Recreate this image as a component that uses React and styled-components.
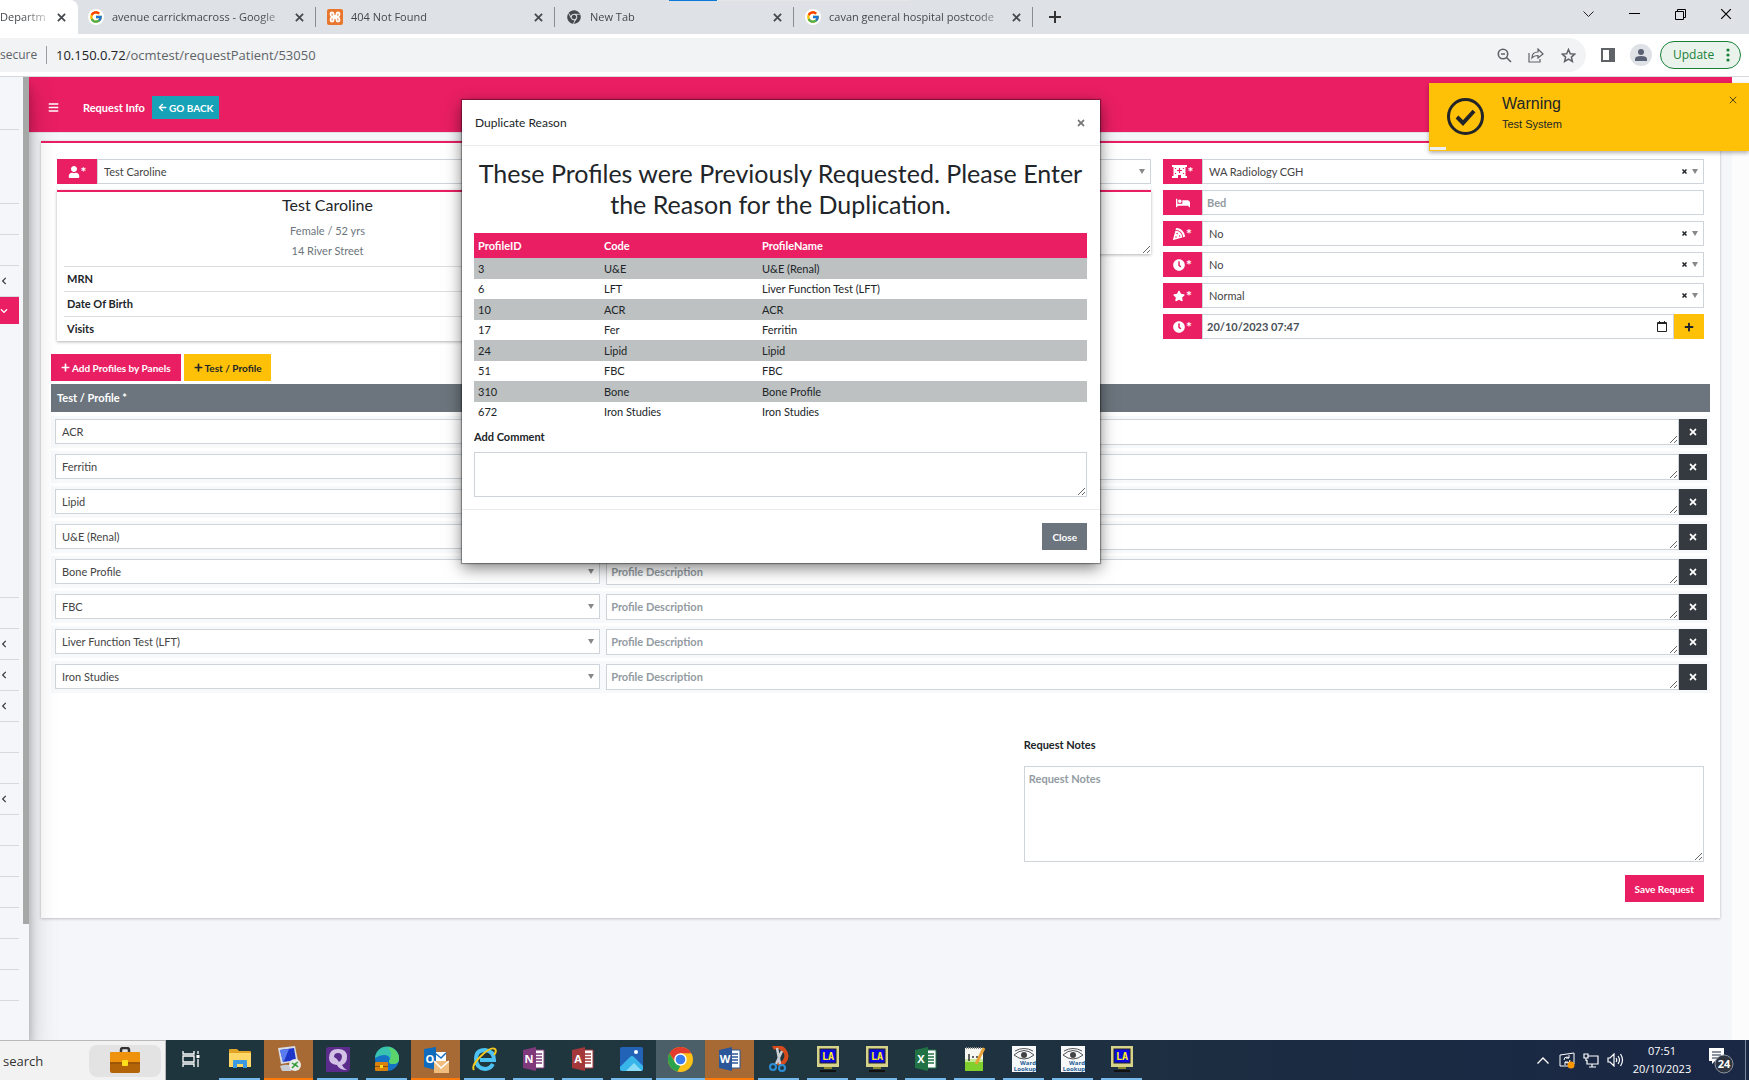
import React from "react";
import styled, { createGlobalStyle, css } from "styled-components";
import {
  FaArrowLeft, FaBars, FaBed, FaChevronDown, FaChevronLeft, FaChrome, FaClock,
  FaPizzaSlice, FaPlus, FaStar, FaTimes, FaUser,
} from "react-icons/fa";
import { FcGoogle } from "react-icons/fc";

const pink = "#e91e63";
const amber = "#ffc107";
const slate = "#6c757d";
const line = "#ced4da";
const appFont = `Lato, "Open Sans", sans-serif`;
const chromeFont = `"Open Sans", "Noto Sans", sans-serif`;

const GlobalStyle = createGlobalStyle`
  *, *::before, *::after { box-sizing: border-box; }
  html, body, #root { height: 100%; }
  body {
    margin: 0;
    overflow: hidden;
    font: 11px/16px ${appFont};
    color: #212529;
    background: #f4f6f9;
  }
  button, input, textarea, select { font: inherit; color: inherit; margin: 0; border-radius: 0; }
  button { cursor: pointer; }
  h1, h2, h3, p, ul { margin: 0; padding: 0; font-weight: 400; }
  ul { list-style: none; }
  svg { display: block; flex: none; }
`;

const Screen = styled.div`
  display: flex;
  flex-direction: column;
  height: 100vh;
`;

/* ---------- browser window ---------- */

const TabStrip = styled.div`
  position: relative;
  display: flex;
  flex: none;
  height: 34px;
  background: #dee1e6;
  font: 11px/16px ${chromeFont};
  color: #45494d;
`;

const LoadingLine = styled.div`
  position: absolute;
  top: 0;
  left: 669px;
  width: 241px;
  height: 1px;
  background: linear-gradient(to right, #0b78d8 48px, #e6e6e6 48px);
`;

const Tab = styled.div`
  display: flex;
  align-items: center;
  gap: 8px;
  width: ${(p) => (p.$active ? 78 : 239)}px;
  margin-right: ${(p) => (p.$active ? -1 : 0)}px;
  padding: 0 9px 0 ${(p) => (p.$active ? 0 : 11)}px;
  ${(p) => p.$active && css`background: #fff; border-radius: 0 8px 0 0;`}
`;

const TabTitle = styled.span`
  flex: 1;
  white-space: nowrap;
  mask-image: linear-gradient(to right, #000 calc(100% - 24px), rgba(0, 0, 0, 0.3));
`;

const PlainButton = styled.button`
  display: flex;
  align-items: center;
  justify-content: center;
  width: ${(p) => p.$w || 16}px;
  height: ${(p) => p.$h || 16}px;
  padding: 0;
  border: 0;
  background: none;
`;

const TabRule = styled.span`
  align-self: center;
  width: 1px;
  height: 20px;
  margin-left: -1px;
  background: #8a8d91;
`;

const NewTab = styled(PlainButton)`
  align-self: center;
  margin-left: 14px;
`;

const WindowControls = styled.div`
  display: flex;
  height: 28px;
  margin-left: auto;
  color: #000;
`;

const Favicon = styled.span`
  display: grid;
  place-items: center;
  width: 16px;
  height: 16px;
  border-radius: ${(p) => (p.$orange ? "2px" : "50%")};
  background: ${(p) => (p.$orange ? "#e8762c" : p.$plain ? "none" : "#fff")};
`;

const Toolbar = styled.div`
  display: flex;
  align-items: center;
  flex: none;
  height: 43px;
  padding-right: 8px;
  background: #fff;
  border-bottom: 1px solid #d5d8dc;
  font: 13px/18px ${chromeFont};
  color: #5f6368;
`;

const Omnibox = styled.div`
  display: flex;
  align-items: center;
  flex: 1;
  height: 34px;
  padding-right: 10px;
  background: #f1f3f4;
  border-radius: 0 17px 17px 0;
`;

const Security = styled.span`
  width: 47px;
  margin-right: 9px;
  border-right: 1px solid #9a9da1;
  font-size: 12px;
`;

const Address = styled.div`
  flex: 1;
  b { font-weight: 400; color: #202124; }
`;

const OmniActions = styled.div`
  display: flex;
  gap: 16px;
`;

const Avatar = styled(PlainButton)`
  margin-right: 8px;
  border-radius: 50%;
  background: #dee1e6;
  overflow: hidden;
`;

const UpdateButton = styled.button`
  display: flex;
  align-items: center;
  justify-content: space-between;
  width: 81px;
  height: 28px;
  padding: 0 10px 0 12px;
  border: 1px solid #188038;
  border-radius: 14px;
  background: #e9f3ec;
  color: #188038;
  font-size: 12px;
`;

/* ---------- page shell ---------- */

const Page = styled.div`
  position: relative;
  display: flex;
  flex: 1;
  min-height: 0;
`;

const Sidebar = styled.aside`
  position: relative;
  z-index: 1;
  display: flex;
  justify-content: space-between;
  width: 29px;
  background: #f4f6f9;
  box-shadow: 0 14px 28px rgba(0, 0, 0, 0.25), 0 10px 10px rgba(0, 0, 0, 0.22);
  clip-path: inset(0 -40px 0 0);
`;

const SideList = styled.ul`
  width: 19px;
`;

const SideItem = styled.li`
  display: flex;
  align-items: center;
  height: ${(p) => p.$h || 31}px;
  border-bottom: 1px solid #d6d9de;
  color: #343a40;
  ${(p) => p.$active && css`
    border: 0;
    background: ${pink};
    color: #fff;
  `}
`;

const SideScroll = styled.div`
  width: 6px;
  height: 88%;
  background: #a6a8a8;
`;

const Main = styled.main`
  flex: 1;
  min-width: 0;
`;

const Gutter = styled.div`
  width: 17px;
  background: #fcfcfc;
`;

const Navbar = styled.nav`
  display: flex;
  align-items: center;
  height: 56px;
  padding: 6px 19px 0;
  background: ${pink};
  border-bottom: 1px solid #dee2e6;
  color: #fff;
  font-weight: 700;
`;

const NavTitle = styled.span`
  margin: 0 7px 0 25px;
`;

const Button = styled.button`
  display: inline-flex;
  align-items: center;
  justify-content: center;
  gap: 2px;
  height: ${(p) => (p.$small ? 23 : 27)}px;
  padding: 0 ${(p) => (p.$small ? 6 : 10)}px;
  border: 0;
  background: ${(p) => p.$bg};
  color: ${(p) => p.$color || "#fff"};
  font-size: 10px;
  font-weight: 700;
  white-space: nowrap;
`;

const Card = styled.section`
  margin: 8px 12px;
  padding: 16px 10px;
  border-top: 2px solid ${pink};
  background: #fff;
  box-shadow: 0 0 1px rgba(0, 0, 0, 0.13), 0 1px 3px rgba(0, 0, 0, 0.2);
`;

/* ---------- request form ---------- */

const FormGrid = styled.div`
  display: grid;
  grid-template-columns: repeat(3, 1fr);
  gap: 12px;
  padding: 0 6px;
`;

const Stack = styled.div`
  display: flex;
  flex-direction: column;
  gap: 6px;
  min-width: 0;
`;

const Group = styled.div`
  display: flex;
  height: 25px;
`;

const Addon = styled.label`
  display: flex;
  align-items: center;
  justify-content: center;
  gap: 1px;
  width: ${(p) => (p.$wide ? 40 : 39)}px;
  background: ${pink};
  color: #fff;
  font-size: 14px;
  font-weight: 700;
`;

const SelectBox = styled.div`
  display: flex;
  align-items: center;
  flex: 1;
  min-width: 0;
  height: 25px;
  padding-right: 5px;
  border: 1px solid ${line};
  background: #fff;
`;

const Select = styled.select`
  flex: 1;
  min-width: 0;
  height: 23px;
  padding: 0 6px;
  border: 0;
  background: none;
  appearance: none;
  color: #444;
`;

const Input = styled.input`
  flex: 1;
  min-width: 0;
  padding: 0 4px;
  border: 1px solid ${line};
  border-right-width: ${(p) => (p.$joined ? 0 : 1)}px;
  background: #fff;
  color: #495057;
  font-weight: 700;
  &::placeholder { color: #939ba2; opacity: 1; }
`;

const DateTail = styled.button`
  display: grid;
  place-items: center;
  width: 24px;
  padding: 0;
  border: 1px solid ${line};
  border-left: 0;
  background: #fff;
`;

const AddDate = styled.button`
  display: grid;
  place-items: center;
  width: 30px;
  padding: 0;
  border: 0;
  background: ${amber};
`;

const TextArea = styled.textarea`
  display: block;
  width: 100%;
  height: ${(p) => p.$h}px;
  padding: ${(p) => p.$pad || 4}px 4px;
  border: 1px solid ${line};
  background: #fff;
  font-weight: 700;
  &::placeholder { color: #939ba2; opacity: 1; }
`;

const DetailsArea = styled(TextArea)`
  border-width: 2px 0 0;
  border-color: ${pink};
  box-shadow: 0 1px 3px rgba(0, 0, 0, 0.3);
`;

const PatientCard = styled.div`
  height: 151px;
  border-top: 2px solid ${pink};
  padding: 3px 7px 0;
  text-align: center;
  box-shadow: 0 1px 3px rgba(0, 0, 0, 0.3);
`;

const PatientName = styled.h2`
  margin-bottom: 8px;
  font-size: 16px;
  line-height: 20px;
`;

const PatientLine = styled.p`
  height: 20px;
  color: ${slate};
`;

const Facts = styled.div`
  margin-top: 3px;
`;

const Fact = styled.div`
  height: 25px;
  padding: 4px 3px;
  border-top: 1px solid #dcdfe2;
  text-align: left;
  font-weight: 700;
`;

const ButtonBar = styled.div`
  display: flex;
  gap: 3px;
  margin: 13px 0 3px;
`;

const ListHead = styled.h3`
  padding: 6px;
  margin-bottom: 4px;
  background: ${slate};
  color: #fff;
  font-size: 11px;
  font-weight: 700;
`;

const Rows = styled.div`
  display: grid;
  gap: 3px;
`;

const Row = styled.div`
  display: grid;
  grid-template-columns: 33% 1fr;
  gap: 6px;
  padding: 3px 3px 3px 4px;
  background: #f8f9fa;
`;

const RowEnd = styled.div`
  display: flex;
`;

const RemoveButton = styled.button`
  display: grid;
  place-items: center;
  flex: none;
  width: 28px;
  padding: 0;
  border: 0;
  background: #343a40;
  color: #fff;
`;

const Notes = styled.div`
  display: flex;
  flex-direction: column;
  gap: 13px;
  width: 41%;
  margin: 44px 6px 0 auto;
  font-weight: 700;
  ${Button} { align-self: flex-end; }
`;

/* ---------- dialog and toast ---------- */

const Dialog = styled.div`
  position: absolute;
  z-index: 2;
  top: 23px;
  left: 462px;
  width: 638px;
  background: #fff;
  box-shadow: 0 0 1px 1px rgba(0, 0, 0, 0.35), 0 5px 15px rgba(0, 0, 0, 0.5);
`;

const DialogHead = styled.header`
  display: flex;
  align-items: center;
  justify-content: space-between;
  height: 46px;
  padding: 0 11px 0 13px;
  border-bottom: 1px solid #e9ecef;
  font-size: 12px;
`;

const DialogBody = styled.div`
  padding: 12px 13px 12px 12px;
`;

const DialogTitle = styled.h1`
  margin-bottom: 13px;
  text-align: center;
  font-size: 25px;
  line-height: 31px;
`;

const Table = styled.table`
  width: 100%;
  table-layout: fixed;
  border-collapse: collapse;
  th, td { padding: 0 4px; text-align: left; }
  th { height: 25px; background: ${pink}; color: #fff; }
  th:nth-child(1) { width: 126px; }
  th:nth-child(2) { width: 158px; }
  td { height: 20px; }
  tbody tr:nth-child(odd) td { height: 21px; background: #bdc1c1; }
`;

const CommentLabel = styled.label`
  display: block;
  margin: 7px 0;
  font-weight: 700;
`;

const DialogFoot = styled.footer`
  display: flex;
  justify-content: flex-end;
  padding: 13px;
  border-top: 1px solid #e9ecef;
`;

const Toast = styled.div`
  position: absolute;
  z-index: 3;
  top: 6px;
  right: 0;
  display: flex;
  align-items: flex-start;
  width: 320px;
  height: 68px;
  padding: 15px 10px 0 18px;
  background: ${amber};
  box-shadow: 0 2px 4px rgba(0, 0, 0, 0.3);
  font-family: "Liberation Sans", Arial, sans-serif;
`;

const ToastText = styled.div`
  flex: 1;
  padding-left: 18px;
  margin-top: -4px;
  strong { display: block; font-size: 16px; line-height: 20px; font-weight: 400; }
  span { line-height: 20px; }
`;

const ToastProgress = styled.div`
  position: absolute;
  left: 1px;
  bottom: 1px;
  width: 16px;
  height: 3px;
  background: #efefef;
`;

/* ---------- taskbar ---------- */

const Taskbar = styled.footer`
  position: relative;
  z-index: 4;
  display: flex;
  flex: none;
  height: 40px;
  background: linear-gradient(to right, #1f353d 10%, #21373f 45%, #1b2b42 75%, #1a2745);
  color: #fff;
  font: 11px/18px ${chromeFont};
`;

const Search = styled.div`
  display: flex;
  align-items: center;
  justify-content: space-between;
  width: 166px;
  padding: 0 4px 0 3px;
  border-top: 1px solid #b9b9b9;
  border-right: 1px solid #b9b9b9;
  background: #f2f2f2;
  color: #333;
  font-size: 13px;
`;

const SearchPill = styled.button`
  display: grid;
  place-items: center;
  width: 72px;
  height: 32px;
  padding: 0;
  border: 0;
  border-radius: 8px;
  background: #e3e3e3;
`;

const taskFill = { alert: "#a86a35", active: "#4b5f68" };
const taskLine = { alert: "#ff7a0a", idle: "transparent" };

const Task = styled.button`
  display: grid;
  place-items: center;
  width: ${(p) => (taskFill[p.$mode] ? 49 : 41)}px;
  margin: 0 ${(p) => (taskFill[p.$mode] ? 0 : 4)}px;
  padding: 0;
  border: 0;
  border-bottom: 2px solid ${(p) => taskLine[p.$mode] || "#76b9ed"};
  background: ${(p) => taskFill[p.$mode] || "none"};
`;

const Tray = styled.div`
  display: flex;
  align-items: center;
  gap: 8px;
  margin-left: auto;
  padding-right: 3px;
`;

const Clock = styled.time`
  width: 62px;
  text-align: center;
`;

const Notice = styled(PlainButton)`
  margin: 0 3px 0 7px;
`;

const DesktopEdge = styled.span`
  align-self: stretch;
  width: 1px;
  background: #7c8798;
`;

/* ---------- drawings ---------- */

const Cross = ({ size = 9, w = 2 }) => (
  <svg width={size} height={size} viewBox="0 0 10 10" stroke="currentColor" strokeWidth={w} fill="none">
    <path d="M1 1 9 9M9 1 1 9" />
  </svg>
);

const Caret = () => (
  <svg width="6" height="5" viewBox="0 0 6 5"><path d="M0 0h6L3 5z" fill="#888" /></svg>
);

const Clinic = () => (
  <svg width="15" height="13" viewBox="0 0 15 13">
    <path d="M0 0h15v2h-1.500v9H15v2H9v-3H6v3H0v-2h1.500V2H0z" fill="#fff" />
    <path d="M7.500 3v5M5 5.500h5M3.500 3v1M11.500 3v1M3.500 8v1M11.500 8v1" stroke={pink} strokeWidth="1.200" />
  </svg>
);

const Office = ({ letter, color }) => (
  <svg width="24" height="26" viewBox="0 0 24 26">
    <path d="M12 4h10v18H12z" fill="#fff" stroke={color} />
    <path d="M14 8h6M14 11h6M14 14h6M14 17h6" stroke={color} strokeWidth="1.5" />
    <path d="M1 4 14 1v24L1 22z" fill={color} />
    <text x="7" y="17" textAnchor="middle" fontSize="11" fontWeight="700" fontFamily="Open Sans" fill="#fff">{letter}</text>
  </svg>
);

const Briefcase = ({ width = 30 }) => (
  <svg width={width} height={width * 0.87} viewBox="0 0 30 26">
    <path d="M11 5V3q0-2 2-2h4q2 0 2 2v2" fill="none" stroke="#333" strokeWidth="2.5" />
    <rect y="5" width="30" height="21" rx="2" fill="#b36408" />
    <path d="M0 7q0-2 2-2h26q2 0 2 2v9H0z" fill="#ef930c" />
    <path d="M0 15h30v2H0z" fill="#9c5607" />
    <rect x="12" y="13" width="6" height="6" rx="1" fill="#ffdf1b" />
  </svg>
);

const TaskView = () => (
  <svg width="18" height="18" viewBox="0 0 18 18" stroke="#fff" fill="none" strokeWidth="1.3">
    <path d="M1 1v3h11V1M1 17v-3h11v3M1 6h11v6H1zM16 1v3M16 9v8" /><path d="M14.500 5h3v3h-3z" fill="#fff" stroke="none" />
  </svg>
);

const Folder = () => (
  <svg width="24" height="22" viewBox="0 0 24 22">
    <path d="M1 2q0-1 1-1h7l2 2h11q1 0 1 1v15H1z" fill="#e0a526" />
    <path d="M1 5h22v14H1z" fill="#ffd767" />
    <path d="M5 20v-7q0-1 1-1h12q1 0 1 1v7h-4v-4H9v4z" fill="#3d9ae0" />
  </svg>
);

const Remote = () => (
  <svg width="24" height="26" viewBox="0 0 24 26">
    <path d="M1 2 18 0l3 15-17 3z" fill="#d8dce4" /><path d="m3 4 14-2 2 12L6 16z" fill="#1d36c9" />
    <path d="m3 4 9-1-5 12-1 1z" fill="#5a7cf0" />
    <path d="M3 20q8-3 14 1l-3 4H5z" fill="#c9ccd4" />
    <circle cx="18" cy="19" r="6" fill="#e8ebe8" /><path d="m15 17 3 2-3 3M21 16l-3 2 3 3" stroke="#2f9a36" strokeWidth="1.5" fill="none" />
  </svg>
);

const Purple = () => (
  <svg width="25" height="26" viewBox="0 0 25 26">
    <path d="M4 1h21v21q0 4-4 4H1V4q0-3 3-3z" fill="#5b2c8c" />
    <path d="M4 12Q4 3 13 3t9 8q0 6-5 8 1 3 5 5-8 0-10-5-8-1-8-7z" fill="#d3c2e6" />
    <path d="M9 11q0-4 4-4t4 4q0 3-3 5-1-3-5-5z" fill="#5b2c8c" />
  </svg>
);

const Edge = () => (
  <svg width="26" height="26" viewBox="0 0 26 26">
    <circle cx="13" cy="13" r="12" fill="#1572c4" />
    <path d="M1 12A12 12 0 0 1 25 13q0 5-6 5-5 0-4-3 2-3-1-5-5-3-13 2z" fill="#37c3b0" />
    <path d="M14 1q11 2 11 12 0 5-6 5-5 0-4-3 5-7-1-14z" fill="#5bd46c" />
    <rect x="1" y="16" width="13" height="9" rx="1" fill="#d9810c" /><path d="M1 20h13v1H1z" fill="#8b4a05" /><path d="M6 19h3v3H6z" fill="#ffdf1b" />
  </svg>
);

const Outlook = () => (
  <svg width="26" height="27" viewBox="0 0 26 27">
    <path d="M12 6h11v13H12z" fill="#fff" /><path d="m12 7 6 5 5-5" stroke="#1672c4" strokeWidth="1.5" fill="none" />
    <path d="M1 3 13 1v23L1 21z" fill="#0f6cbd" />
    <text x="7" y="17" textAnchor="middle" fontSize="11" fontWeight="700" fontFamily="Open Sans" fill="#fff">O</text>
    <path d="M11 15h15v12H11z" fill="#f0bd7e" /><path d="m11 15 7 7 8-7" fill="none" stroke="#fff" strokeWidth="1.500" />
  </svg>
);

const Explorer = () => (
  <svg width="25" height="26" viewBox="0 0 25 26" fill="none">
    <path d="M21 18q-3 5-8 5-9-1-9-10t9-9q9 1 9 10H8" stroke="#4cc3f2" strokeWidth="4" />
    <path d="M2 24Q-1 20 8 11 19 0 23 3q2 2-1 6" stroke="#f5c91d" strokeWidth="2" />
  </svg>
);

const Photos = () => (
  <svg width="23" height="24" viewBox="0 0 23 24">
    <rect width="23" height="24" rx="2" fill="#2263b8" /><path d="m0 20 10-10q2-2 4 0l9 9v3q0 2-2 2H2q-2 0-2-2z" fill="#38b6ea" />
    <path d="m6 24 8-8 8 8z" fill="#8bdcf6" /><circle cx="16" cy="5" r="2" fill="#fff" />
  </svg>
);

const ChromeLogo = () => (
  <svg width="25" height="25" viewBox="0 0 24 24">
    <circle cx="12" cy="12" r="12" fill="#fbc116" />
    <path d="M1.600 6 6.800 15l5.200 3-3 5.600A12 12 0 0 1 1.600 6z" fill="#2ba24c" />
    <path d="M1.600 6A12 12 0 0 1 22.400 6H12L6 13z" fill="#e33b2e" />
    <circle cx="12" cy="12" r="6" fill="#fff" /><circle cx="12" cy="12" r="4.600" fill="#3b7ded" />
  </svg>
);

const Snip = () => (
  <svg width="20" height="26" viewBox="0 0 20 26" fill="none">
    <path d="M4 2q6-3 11 2 5 6 0 12-3 3-6 1" stroke="#d64a1c" strokeWidth="4" />
    <path d="m8 2 3 16M13 5 7 18" stroke="#c8ced3" strokeWidth="2.500" />
    <circle cx="4" cy="21" r="3" stroke="#2d8fd8" strokeWidth="2" /><circle cx="13" cy="22" r="3" stroke="#2d8fd8" strokeWidth="2" />
  </svg>
);

const LabTerminal = () => (
  <svg width="22" height="27" viewBox="0 0 22 27">
    <rect width="22" height="21" fill="#d6d28a" /><rect x="3" y="3" width="16" height="14" fill="#0a0ae0" stroke="#222" />
    <text x="11" y="14" textAnchor="middle" fontSize="10" fontWeight="700" fontFamily="DejaVu Sans Mono" fill="#ffef1c">LA</text>
    <path d="M7 21h8v2H7z" fill="#8a862c" /><path d="M3 24h16v2H3z" fill="#111" />
  </svg>
);

const Notepad = () => (
  <svg width="22" height="26" viewBox="0 0 22 26">
    <path d="M1 2h18v23H1z" fill="#f5f7f0" /><path d="M1 15h18v10H1z" fill="#7fd02c" /><path d="M1 13h18v3H1z" fill="#c7ea95" />
    <path d="M5 8v7M8 11h2M12 11h2" stroke="#333" strokeWidth="1.500" /><path d="M2 2h16" stroke="#888" strokeDasharray="1 1" strokeWidth="2" />
    <path d="m20 2-8 16" stroke="#e8a33a" strokeWidth="3" />
  </svg>
);

const WardLookup = () => (
  <svg width="24" height="26" viewBox="0 0 24 26">
    <rect width="24" height="26" fill="#f6f8fa" />
    <path d="M2 9q10-9 20 0-10 8-20 0zM3 5q9-5 18 0" fill="none" stroke="#555" /><circle cx="12" cy="9" r="3" fill="#444" />
    <text x="16" y="19" textAnchor="middle" fontSize="6" fontWeight="700" fontFamily="Open Sans" fill="#1d5c96">Ward</text>
    <text x="13" y="25" textAnchor="middle" fontSize="6" fontWeight="700" fontFamily="Open Sans" fill="#1d5c96">Lookup</text>
  </svg>
);

/* ---------- data ---------- */

const tabs = [
  { title: "avenue carrickmacross - Google", icon: "google" },
  { title: "404 Not Found", icon: "xampp" },
  { title: "New Tab", icon: "chrome" },
  { title: "cavan general hospital postcode", icon: "google" },
];

const profiles = ["ACR", "Ferritin", "Lipid", "U&E (Renal)", "Bone Profile", "FBC", "Liver Function Test (LFT)", "Iron Studies"];

const duplicates = [
  [3, "U&E", "U&E (Renal)"],
  [6, "LFT", "Liver Function Test (LFT)"],
  [10, "ACR", "ACR"],
  [17, "Fer", "Ferritin"],
  [24, "Lipid", "Lipid"],
  [51, "FBC", "FBC"],
  [310, "Bone", "Bone Profile"],
  [672, "Iron Studies", "Iron Studies"],
];

const sideItems = [
  { h: 53 }, { h: 74 }, {}, {}, { arrow: true }, { h: 27, active: true }, { h: 274 },
  {}, { arrow: true }, { arrow: true }, { arrow: true }, {}, {}, { arrow: true },
  {}, {}, {}, {}, {}, {},
];

const tasks = [
  { name: "Task View", icon: <TaskView />, mode: "idle" },
  { name: "File Explorer", icon: <Folder /> },
  { name: "Remote Desktop", icon: <Remote />, mode: "alert" },
  { name: "Q", icon: <Purple /> },
  { name: "Edge", icon: <Edge /> },
  { name: "Outlook", icon: <Outlook />, mode: "alert" },
  { name: "Internet Explorer", icon: <Explorer /> },
  { name: "OneNote", icon: <Office letter="N" color="#80397b" /> },
  { name: "Access", icon: <Office letter="A" color="#a4373a" /> },
  { name: "Photos", icon: <Photos /> },
  { name: "Chrome", icon: <ChromeLogo />, mode: "active" },
  { name: "Word", icon: <Office letter="W" color="#2b579a" />, mode: "alert" },
  { name: "Snipping Tool", icon: <Snip /> },
  { name: "Lab terminal 1", icon: <LabTerminal /> },
  { name: "Lab terminal 2", icon: <LabTerminal /> },
  { name: "Excel", icon: <Office letter="X" color="#217346" /> },
  { name: "Notepad++", icon: <Notepad /> },
  { name: "Ward Lookup 1", icon: <WardLookup /> },
  { name: "Ward Lookup 2", icon: <WardLookup /> },
  { name: "Lab terminal 3", icon: <LabTerminal /> },
];

/* ---------- parts ---------- */

function TabIcon({ kind }) {
  if (kind === "google") return <Favicon><FcGoogle size={14} /></Favicon>;
  if (kind === "chrome") return <Favicon $plain><FaChrome size={14} /></Favicon>;
  return (
    <Favicon $orange>
      <svg width="12" height="12" viewBox="0 0 12 12" fill="none" stroke="#fff" strokeWidth="1.800">
        <path d="M4.500 5V3q0-1.500-1.500-1.500T1.500 3t1.500 3q-1.500 1.500-1.500 3T3 10.500 4.500 9V7h3v2q0 1.500 1.500 1.500t1.500-1.500T9 6q1.500-1.500 1.500-3T9 1.500 7.500 3v2z" />
      </svg>
    </Favicon>
  );
}

function BrowserChrome() {
  return (
    <>
      <TabStrip>
        <LoadingLine />
        <Tab $active>
          <TabTitle>Departm</TabTitle>
          <PlainButton aria-label="Close tab"><Cross /></PlainButton>
        </Tab>
        {tabs.map((t) => (
          <React.Fragment key={t.title}>
            <Tab>
              <TabIcon kind={t.icon} />
              <TabTitle>{t.title}</TabTitle>
              <PlainButton aria-label="Close tab"><Cross /></PlainButton>
            </Tab>
            <TabRule />
          </React.Fragment>
        ))}
        <NewTab aria-label="New tab">
          <svg width="12" height="12" viewBox="0 0 12 12" stroke="#333" strokeWidth="2"><path d="M6 0v12M0 6h12" /></svg>
        </NewTab>
        <WindowControls>
          <PlainButton $w={46} $h={28} aria-label="Search tabs">
            <svg width="11" height="6" viewBox="0 0 11 6" fill="none" stroke="#222"><path d="M.5.500l5 5 5-5" /></svg>
          </PlainButton>
          <PlainButton $w={46} $h={28} aria-label="Minimise">
            <svg width="11" height="2" viewBox="0 0 11 2"><path d="M0 0h11v1H0z" /></svg>
          </PlainButton>
          <PlainButton $w={46} $h={28} aria-label="Restore">
            <svg width="11" height="11" viewBox="0 0 11 11" fill="none" stroke="#000"><path d="M.5 2.500h8v8h-8zM2.500 2.500v-2h8v8h-2" /></svg>
          </PlainButton>
          <PlainButton $w={46} $h={28} aria-label="Close"><Cross size={12} w={1} /></PlainButton>
        </WindowControls>
      </TabStrip>
      <Toolbar>
        <Omnibox>
          <Security>secure</Security>
          <Address><b>10.150.0.72</b>/ocmtest/requestPatient/53050</Address>
          <OmniActions>
            <PlainButton aria-label="Zoom">
              <svg width="15" height="15" viewBox="0 0 15 15" fill="none" stroke="currentColor" strokeWidth="1.600"><circle cx="6" cy="6" r="4.700" /><path d="m9.500 9.500 4.500 4.500M4 6h4" /></svg>
            </PlainButton>
            <PlainButton aria-label="Share">
              <svg width="16" height="15" viewBox="0 0 16 15" fill="none" stroke="currentColor" strokeWidth="1.200"><path d="M1 5v9h11v-3M4 10q0-6 6-6V1l5 5-5 4V7.500Q6 7.500 4 10z" /></svg>
            </PlainButton>
            <PlainButton aria-label="Bookmark">
              <svg width="15" height="15" viewBox="0 0 15 15" fill="none" stroke="currentColor" strokeWidth="1.500"><path d="m7.500 1.500 1.800 4.200 4.500.4-3.400 3 1 4.400-3.900-2.300-3.900 2.300 1-4.400-3.400-3 4.500-.4z" /></svg>
            </PlainButton>
          </OmniActions>
        </Omnibox>
        <PlainButton $w={44} aria-label="Side panel">
          <svg width="14" height="14" viewBox="0 0 14 14"><path fill="currentColor" d="M0 0h14v14H0zM2 2v10h6V2z" fillRule="evenodd" /></svg>
        </PlainButton>
        <Avatar $w={22} $h={22} aria-label="Profile">
          <svg width="22" height="22" viewBox="0 0 22 22" fill="#5a6175"><circle cx="11" cy="8" r="3" /><path d="M5 17v-2q0-3 6-3t6 3v2z" /></svg>
        </Avatar>
        <UpdateButton>
          Update
          <svg width="4" height="14" viewBox="0 0 4 14" fill="currentColor"><circle cx="2" cy="2" r="1.600" /><circle cx="2" cy="7" r="1.600" /><circle cx="2" cy="12" r="1.600" /></svg>
        </UpdateButton>
      </Toolbar>
    </>
  );
}

function SelectField({ id, value, label, clearable }) {
  return (
    <SelectBox>
      <Select id={id} aria-label={label} defaultValue={value}><option>{value}</option></Select>
      {clearable && <PlainButton aria-label="Clear"><Cross size={5} w={3} /></PlainButton>}
      <Caret />
    </SelectBox>
  );
}

function Field({ id, label, icon, wide, required = true, children }) {
  return (
    <Group>
      <Addon htmlFor={id} aria-label={label} $wide={wide}>{icon}{required && "*"}</Addon>
      {children}
    </Group>
  );
}

function RequestForm() {
  return (
    <FormGrid>
      <Stack>
        <Field id="patient" label="Patient" wide icon={<FaUser size={12} />}>
          <SelectField id="patient" value="Test Caroline" />
        </Field>
        <PatientCard>
          <PatientName>Test Caroline</PatientName>
          <PatientLine>Female / 52 yrs</PatientLine>
          <PatientLine>14 River Street</PatientLine>
          <Facts>
            <Fact>MRN</Fact>
            <Fact>Date Of Birth</Fact>
            <Fact>Visits</Fact>
          </Facts>
        </PatientCard>
      </Stack>
      <Stack>
        <Group><SelectField label="Clinician" value="" /></Group>
        <DetailsArea $h={64} aria-label="Clinical details" />
      </Stack>
      <Stack>
        <Field id="ward" label="Ward" icon={<Clinic />}>
          <SelectField id="ward" value="WA Radiology CGH" clearable />
        </Field>
        <Field id="bed" label="Bed" icon={<FaBed size={14} />} required={false}>
          <Input id="bed" placeholder="Bed" />
        </Field>
        <Field id="fasting" label="Fasting" icon={<FaPizzaSlice size={12} />}>
          <SelectField id="fasting" value="No" clearable />
        </Field>
        <Field id="timed" label="Timed" icon={<FaClock size={12} />}>
          <SelectField id="timed" value="No" clearable />
        </Field>
        <Field id="priority" label="Priority" icon={<FaStar size={12} />}>
          <SelectField id="priority" value="Normal" clearable />
        </Field>
        <Field id="when" label="Date and time" icon={<FaClock size={12} />}>
          <Input id="when" $joined defaultValue="20/10/2023 07:47" />
          <DateTail aria-label="Open calendar">
            <svg width="10" height="11" viewBox="0 0 10 11" fill="none" stroke="#222"><path d="M.5 1.500h9v9h-9zM.5 2.500h9M2.500 0v2M7.500 0v2" /></svg>
          </DateTail>
          <AddDate aria-label="Add date"><FaPlus size={10} /></AddDate>
        </Field>
      </Stack>
    </FormGrid>
  );
}

function DuplicateDialog() {
  return (
    <Dialog role="dialog" aria-labelledby="dup-title">
      <DialogHead>
        Duplicate Reason
        <PlainButton aria-label="Close dialog"><FaTimes size={10} color="#777" /></PlainButton>
      </DialogHead>
      <DialogBody>
        <DialogTitle id="dup-title">
          These Profiles were Previously Requested. Please Enter the Reason for the Duplication.
        </DialogTitle>
        <Table>
          <thead><tr><th>ProfileID</th><th>Code</th><th>ProfileName</th></tr></thead>
          <tbody>
            {duplicates.map(([id, code, name]) => (
              <tr key={id}><td>{id}</td><td>{code}</td><td>{name}</td></tr>
            ))}
          </tbody>
        </Table>
        <CommentLabel htmlFor="comment">Add Comment</CommentLabel>
        <TextArea id="comment" $h={45} />
      </DialogBody>
      <DialogFoot><Button $bg={slate}>Close</Button></DialogFoot>
    </Dialog>
  );
}

function WindowsTaskbar() {
  return (
    <Taskbar>
      <Search>
        search
        <SearchPill aria-label="Search highlight"><Briefcase /></SearchPill>
      </Search>
      {tasks.map((t) => <Task key={t.name} $mode={t.mode} aria-label={t.name}>{t.icon}</Task>)}
      <Tray>
        <PlainButton aria-label="Show hidden icons">
          <svg width="12" height="7" viewBox="0 0 12 7" fill="none" stroke="#fff" strokeWidth="1.400"><path d="m.5 6.500 5.500-5.500 5.500 5.500" /></svg>
        </PlainButton>
        <PlainButton aria-label="Updates">
          <svg width="16" height="17" viewBox="0 0 16 17" fill="none" stroke="#fff"><path d="M1 3 15 1v11M1 3v11h8M5 8q0-3 3-3l2 1M11 8q0 3-3 3l-2-1M10 3v3H7M6 13v-3h3" /><circle cx="12" cy="13" r="3.500" fill="#ff9800" stroke="none" /></svg>
        </PlainButton>
        <PlainButton aria-label="Network">
          <svg width="16" height="15" viewBox="0 0 16 15" fill="none" stroke="#fff" strokeWidth="1.200"><path d="M5 3h10v8H4V7M9 11v3M6 14h7M1 1h4v4H1zM3 5v3" /></svg>
        </PlainButton>
        <PlainButton aria-label="Volume">
          <svg width="17" height="14" viewBox="0 0 17 14" fill="none" stroke="#fff" strokeWidth="1.200"><path d="M1 5h2l4-4v12L3 9H1zM9 5q1.500 2 0 4M11 3q3 4 0 8M13.500 1q4 6 0 12" /></svg>
        </PlainButton>
        <Clock>07:51<br />20/10/2023</Clock>
        <Notice $w={26} $h={28} aria-label="24 notifications">
          <svg width="26" height="28" viewBox="0 0 26 28">
            <path d="M1 2h15v13H7l-3 3v-3H1z" fill="#fff" /><path d="M4 6h9M4 9h9M4 12h6" stroke="#1b2b42" />
            <circle cx="16" cy="18" r="9" fill="#2d3440" stroke="#8f959e" />
            <text x="16" y="22" textAnchor="middle" fontSize="11" fontWeight="700" fontFamily="Open Sans" fill="#fff">24</text>
          </svg>
        </Notice>
        <DesktopEdge />
      </Tray>
    </Taskbar>
  );
}

export default function App() {
  return (
    <Screen>
      <GlobalStyle />
      <BrowserChrome />
      <Page>
        <Sidebar>
          <SideList>
            {sideItems.map((item, i) => (
              <SideItem key={i} $h={item.h} $active={item.active}>
                {item.arrow && <FaChevronLeft size={8} />}
                {item.active && <FaChevronDown size={8} />}
              </SideItem>
            ))}
          </SideList>
          <SideScroll />
        </Sidebar>
        <Main>
          <Navbar>
            <PlainButton $w={10} aria-label="Menu"><FaBars size={11} color="#fff" /></PlainButton>
            <NavTitle>Request Info</NavTitle>
            <Button $small $bg="#17a2b8"><FaArrowLeft size={9} />GO BACK</Button>
          </Navbar>
          <Card>
            <RequestForm />
            <ButtonBar>
              <Button $bg={pink}><FaPlus size={9} />Add Profiles by Panels</Button>
              <Button $bg={amber} $color="#212529"><FaPlus size={9} />Test / Profile</Button>
            </ButtonBar>
            <ListHead>Test / Profile *</ListHead>
            <Rows>
              {profiles.map((name) => (
                <Row key={name}>
                  <SelectField label="Test or profile" value={name} />
                  <RowEnd>
                    <TextArea $h={26} placeholder="Profile Description" aria-label={`${name} description`} />
                    <RemoveButton aria-label={`Remove ${name}`}><FaTimes size={10} /></RemoveButton>
                  </RowEnd>
                </Row>
              ))}
            </Rows>
            <Notes>
              <label htmlFor="notes">Request Notes</label>
              <TextArea id="notes" $h={96} placeholder="Request Notes" />
              <Button $bg={pink}>Save Request</Button>
            </Notes>
          </Card>
        </Main>
        <Gutter />
        <DuplicateDialog />
        <Toast role="alert">
          <svg width="37" height="37" viewBox="0 0 37 37" fill="none" stroke="#212529">
            <circle cx="18.500" cy="18.500" r="17" strokeWidth="3" /><path d="m10 19 6 6 11-12" strokeWidth="4" />
          </svg>
          <ToastText><strong>Warning</strong><span>Test System</span></ToastText>
          <PlainButton $w={12} $h={4} aria-label="Dismiss"><Cross size={8} w={1} /></PlainButton>
          <ToastProgress />
        </Toast>
      </Page>
      <WindowsTaskbar />
    </Screen>
  );
}
